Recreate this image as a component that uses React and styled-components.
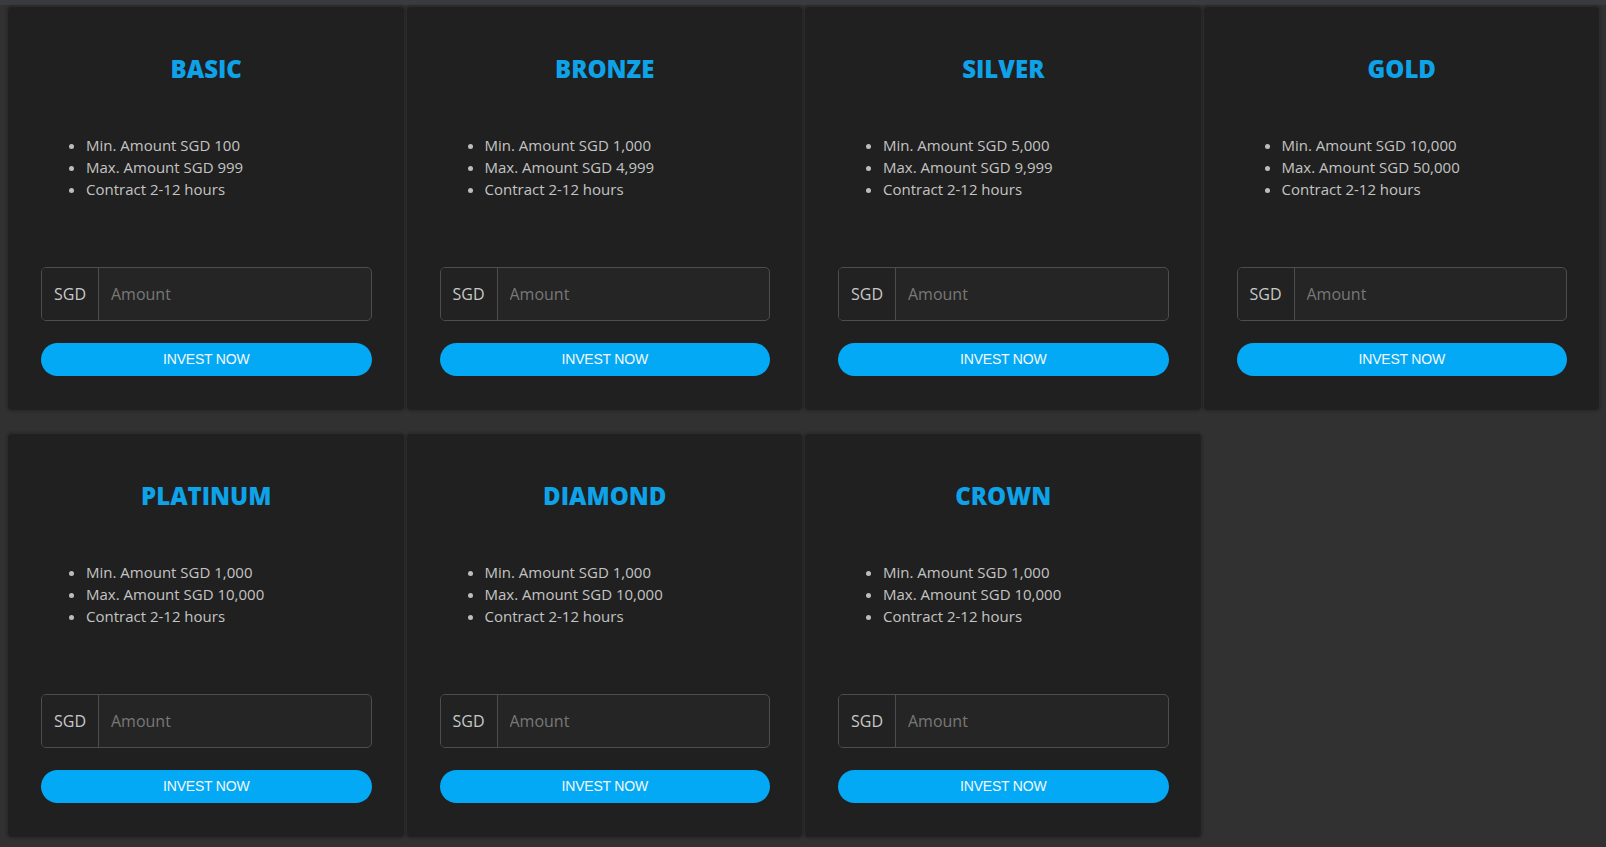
import React from "react";
import styled, { createGlobalStyle } from "styled-components";

const GlobalStyle = createGlobalStyle`
  html, body {
    margin: 0;
    padding: 0;
    background: #313131;
  }
  body {
    font-family: "Open Sans", "Noto Sans", sans-serif;
  }
  * {
    box-sizing: border-box;
  }
`;

const plans = [
  { name: "BASIC", min: "100", max: "999" },
  { name: "BRONZE", min: "1,000", max: "4,999" },
  { name: "SILVER", min: "5,000", max: "9,999" },
  { name: "GOLD", min: "10,000", max: "50,000" },
  { name: "PLATINUM", min: "1,000", max: "10,000" },
  { name: "DIAMOND", min: "1,000", max: "10,000" },
  { name: "CROWN", min: "1,000", max: "10,000" },
];

function PlanCard({ plan }) {
  return (
    <Card>
      <Title>{plan.name}</Title>
      <Features>
        <li>Min. Amount SGD {plan.min}</li>
        <li>Max. Amount SGD {plan.max}</li>
        <li>Contract 2-12 hours</li>
      </Features>
      <InputGroup>
        <Addon>SGD</Addon>
        <AmountInput type="text" placeholder="Amount" />
      </InputGroup>
      <InvestButton>INVEST NOW</InvestButton>
    </Card>
  );
}

export default function App() {
  return (
    <Page>
      <GlobalStyle />
      <Grid>
        {plans.map((p) => (
          <PlanCard key={p.name} plan={p} />
        ))}
      </Grid>
    </Page>
  );
}

const Page = styled.div`
  min-height: 100vh;
  background: #313131;
  border-top: 5px solid #3a3b40;
  padding: 1px 6px 9px 7px;
`;

const Grid = styled.div`
  display: grid;
  grid-template-columns: repeat(4, 1fr);
  column-gap: 1px;
  row-gap: 22px;
`;

const Card = styled.div`
  display: flex;
  flex-direction: column;
  height: 405px;
  padding: 44px 32px 34px 33px;
  background: #202020;
  border: 1px solid #2b2b2b;
  border-radius: 5px;
  box-shadow: 0 0 3px rgba(0, 0, 0, 0.35);
`;

const Title = styled.h3`
  margin: 0;
  height: 36px;
  line-height: 36px;
  text-align: center;
  font-size: 24px;
  font-weight: 800;
  color: #0ea2e8;
`;

const Features = styled.ul`
  margin: 47px 0 0;
  padding-left: 45px;
  list-style: disc;
  color: #c4c4c4;
  font-size: 15px;
  line-height: 22px;
  height: 66px;

  li::marker {
    color: #bdbdbd;
  }
`;

const InputGroup = styled.div`
  display: flex;
  margin-top: 67px;
  height: 55px;
  border: 1px solid #4d4d4d;
  border-radius: 5px;
  background: #252525;
  overflow: hidden;
`;

const Addon = styled.span`
  display: flex;
  align-items: center;
  justify-content: center;
  width: 57px;
  flex-shrink: 0;
  border-right: 1px solid #4d4d4d;
  background: #222222;
  color: #c8c8c8;
  font-size: 16px;
`;

const AmountInput = styled.input`
  flex: 1;
  min-width: 0;
  border: none;
  outline: none;
  background: transparent;
  padding: 0 12px;
  color: #ddd;
  font-family: "Open Sans", "Noto Sans", sans-serif;
  font-size: 16px;

  &::placeholder {
    color: #787878;
  }
`;

const InvestButton = styled.button`
  margin-top: 22px;
  height: 34px;
  border: none;
  border-radius: 17px;
  background: #03a9f4;
  color: #f4f8fb;
  font-family: "Liberation Sans", Arial, sans-serif;
  font-size: 14px;
  letter-spacing: -0.2px;
  cursor: pointer;
`;
